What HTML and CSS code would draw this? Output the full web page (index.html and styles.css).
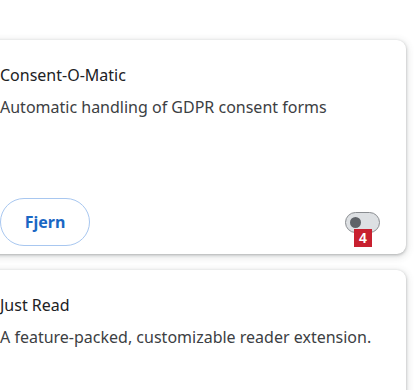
FILE: index.html
```html
<!DOCTYPE html>
<html>
<head>
<meta charset="utf-8">
<link rel="stylesheet" href="styles.css">
</head>
<body>
<div class="list">
  <div class="card">
    <div class="name">Consent-O-Matic</div>
    <div class="desc">Automatic handling of GDPR consent forms</div>
    <div class="footer">
      <button class="btn">Fjern</button>
      <div class="toggle-wrap">
        <div class="toggle"><span class="knob"></span></div>
        <span class="badge">4</span>
      </div>
    </div>
  </div>
  <div class="card">
    <div class="name">Just Read</div>
    <div class="desc">A feature-packed, customizable reader extension.</div>
  </div>
</div>
</body>
</html>
```
FILE: styles.css
```css
html, body {
  margin: 0;
  padding: 0;
  background: #ffffff;
  overflow: hidden;
}
body {
  font-family: "Noto Sans", "Open Sans", sans-serif;
  color: #202124;
}
.list {
  display: flex;
  flex-direction: column;
  gap: 16px;
  padding: 40px 9px 0 0;
}
.card {
  margin-left: -20px;
  padding: 24px 0 8px 20px;
  background: #fff;
  border-radius: 9px;
  box-shadow: 0 1px 3px rgba(60, 64, 67, 0.35), 0 2px 7px 2px rgba(60, 64, 67, 0.12);
  height: 214px;
  box-sizing: border-box;
  flex-shrink: 0;
  display: flex;
  flex-direction: column;
}
.name {
  font-size: 16px;
  line-height: 22px;
  color: #202124;
}
.desc {
  font-size: 16px;
  line-height: 22px;
  margin-top: 10px;
  color: #3c4043;
}
.footer {
  margin-top: auto;
  display: flex;
  align-items: center;
  justify-content: space-between;
  padding-right: 26px;
}
.btn {
  width: 90px;
  height: 48px;
  border: 1.5px solid #a8c7f0;
  border-radius: 24px;
  background: #fff;
  color: #1a67c4;
  font-family: "Noto Sans", sans-serif;
  font-weight: 700;
  font-size: 16px;
  padding: 0;
  margin-left: 0;
}
.toggle-wrap {
  position: relative;
  width: 35px;
  height: 21px;
}
.toggle {
  width: 35px;
  height: 21px;
  box-sizing: border-box;
  border: 1.5px solid #8a8d91;
  border-radius: 11px;
  background: #dde0e3;
  display: flex;
  align-items: center;
  padding-left: 4px;
}
.knob {
  width: 11px;
  height: 11px;
  border-radius: 50%;
  background: #5f6368;
}
.badge {
  position: absolute;
  left: 9px;
  top: 17px;
  width: 18px;
  height: 18px;
  background: #c8202f;
  color: #fff;
  font-family: "Liberation Sans", Arial, sans-serif;
  font-weight: 700;
  font-size: 14px;
  line-height: 18px;
  text-align: center;
}
```
